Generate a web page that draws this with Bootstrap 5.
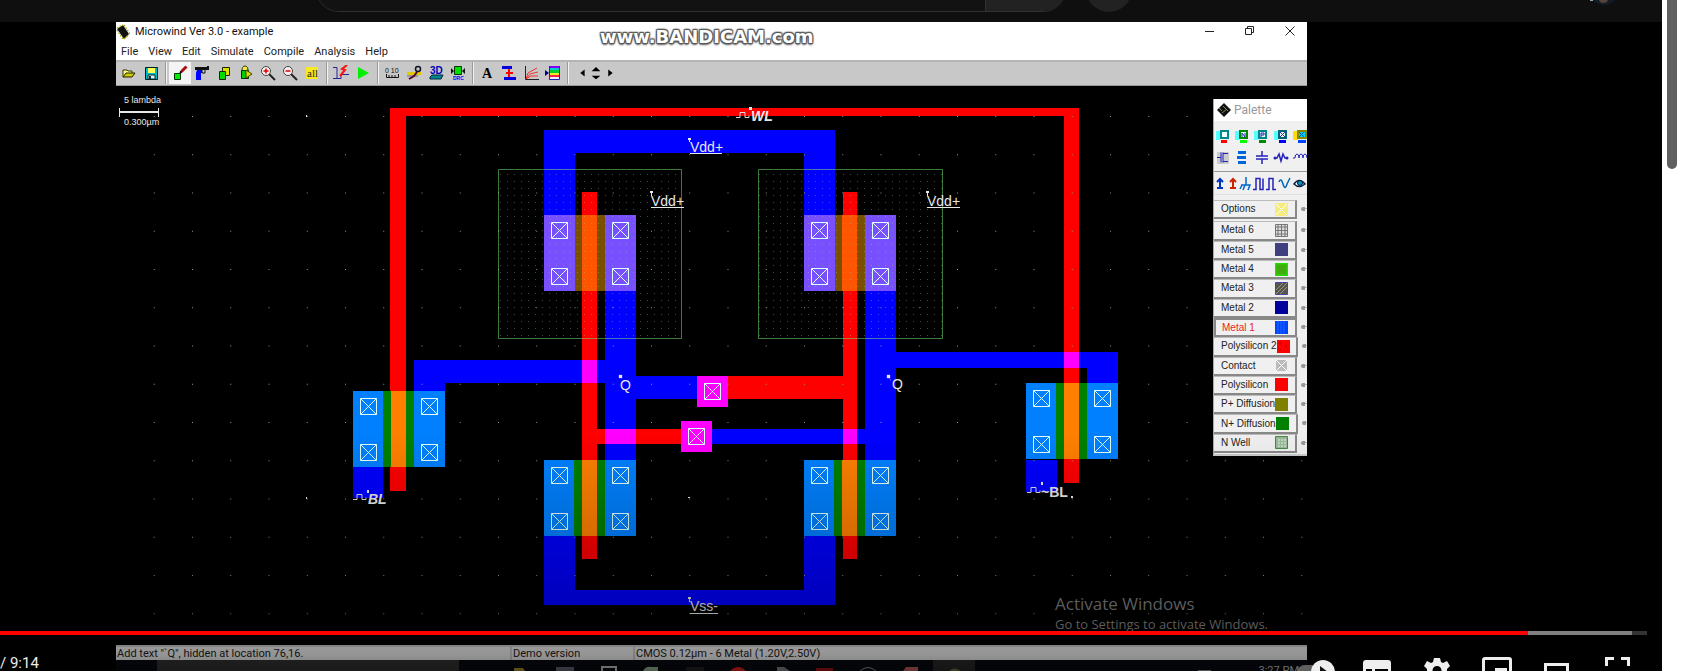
<!DOCTYPE html>
<html lang="en">
<head>
<meta charset="utf-8">
<meta name="viewport" content="width=device-width, initial-scale=1">
<title>Microwind Ver 3.0 - example</title>
<link href="https://cdn.jsdelivr.net/npm/bootstrap@5.3.0/dist/css/bootstrap.min.css" rel="stylesheet">
<style>
body{background:#fff;font-family:Roboto,sans-serif;font-size:11px;line-height:16px;color:#222}
.page-side{width:20px;padding:0 5px}
.thumb{width:10px;height:169px;background:#606060;border-radius:0 0 5px 5px}
.site-head{height:22px;background:#0f0f0f;overflow:hidden}
.find-form{margin-left:316px;width:750px;height:46px;margin-top:-34px;border:1px solid #303030;border-radius:24px;overflow:hidden}
.find-form input{background:#121212;border:0;min-width:0;color:#eee}
.find-form button{width:80px;background:#222;border:0;border-left:1px solid #303030}
.mic{width:46px;height:46px;margin:-34px 0 0 20px;border:0;border-radius:50%;background:#222}
.account{margin-right:42px}
.player{background:#000}
.app-win{margin-left:116px;margin-right:355px}
.title-row{height:20px;background:#fff;color:#111;gap:5px}
.watermark{left:484px;top:5px;font:bold 18px/20px "DejaVu Sans",sans-serif;color:#fff;text-shadow:-1px -1px 1px #555,1px -1px 1px #555,-1px 1px 1px #555,1px 1px 1px #555,0 2px 2px #666,0 -1px 2px #777}
.win-ctl button{width:40px;height:20px;border:0;background:none;padding:0 12px 0 0;display:flex;justify-content:flex-end}
.menu-row{height:18px;background:#fff;gap:10px;padding-left:5px;line-height:20px}
.menu-row a{color:#222;text-decoration:none}
.tool-row{height:26px;background:#c8c8c8;border-top:2px solid #b4b4b4;border-bottom:1px solid #999;padding-left:2px}
.tool-row button{width:22px;height:22px;border:0;background:none;padding:0;display:flex;align-items:center;justify-content:center}
.tool-row button.narrow{width:14px}
.tool-row button.on{background:#f4f4f4}
.tool-row svg{width:16px;height:16px}
.tool-row i{width:7px;height:22px;display:flex;justify-content:center}
.tool-row i::before{content:"";width:2px;border-left:1px solid #999;border-right:1px solid #f2f2f2}
.drawing{background:#000;min-height:0;overflow:hidden}
.drawing>svg{font-family:"Liberation Sans",sans-serif;font-size:14px}
.palette{top:13px;right:0;width:94px;height:357px;background:#f0f0f0;border-left:1px solid #aaa;border-bottom:2px solid #ccc;overflow:hidden;font:10px/16px "Liberation Sans",sans-serif}
.pal-title{height:22px;background:#fff;color:#999;font:12px/22px Roboto,sans-serif;gap:3px;padding-left:3px}
.pal-icons{width:94px;height:51px;border-bottom:1px solid #999;display:block}
.pal-src{width:94px;height:22px;display:block}
.layer-list{height:259px;padding-top:5px}
.layer-list button{width:84px;border:1px solid #bbb;border-width:1px 2px 2px 0;border-color:#bbb #888 #888 #bbb;background:#f0f0f0;padding:0 7px;display:flex;align-items:center;justify-content:space-between;color:#222;line-height:14px;white-space:nowrap}
.layer-list button.picked{border:2px solid #888;color:#e22;padding-left:6px}
.layer-list .opt{margin-bottom:2px}
.layer-row{flex:1 1 0;display:flex;min-height:0}
.layer-row::after{content:"";width:6px;height:4px;margin:7px 0 0 4px;border-left:4px solid #999;border-radius:2px;background:linear-gradient(#aaa,#aaa) 0 1px/6px 1px no-repeat}
.swatch{width:13px;height:13px;flex:none}
.status-row{height:15px;background:#f0f0f0;border-top:2px solid #ccc;line-height:14px;color:#222}
.status-row span{padding-left:1px;border-right:2px solid #ccc;white-space:nowrap}
.status-row .msg{width:396px}
.status-row .ver{width:123px}
.task-row{height:11px;background:#080a10;overflow:hidden;color:#ccc}
.task-find{margin-left:41px;width:302px;background:#343434}
.task-row .clock{padding:3px 8px 0 0}
.shade{left:0;right:0;bottom:0;height:241px;background:linear-gradient(rgba(0,0,0,0),rgba(0,0,0,.18) 50%,rgba(0,0,0,.25) 70%,rgba(0,0,0,.38) 93%,rgba(0,0,0,.5));pointer-events:none}
.notice{left:1055px;bottom:38px;color:#5c5c5c;font:13px/18px "Open Sans",sans-serif}
.notice strong{font-weight:400;font-size:17px;line-height:22px;display:block}
.track{left:0;right:15px;bottom:36px;height:4px;border-radius:0;background:#333}
.track .buf{background:#808080}
.controls{left:0;right:0;bottom:0;height:20px;overflow:hidden;color:#eee}
.controls time{font-size:15px;line-height:16px;padding-top:4px;white-space:pre}
.controls .tools{margin-right:15px}
.controls button{border:0;background:none;padding:0;width:60px;height:38px}
.controls svg{display:block;margin:auto}
</style>
</head>
<body>
<div class="d-flex vh-100 overflow-hidden">
<main class="flex-grow-1 d-flex flex-column overflow-hidden">
<header class="site-head d-flex flex-shrink-0">
  <form class="find-form d-flex flex-shrink-0"><input class="flex-grow-1" aria-label="Search"><button type="button" aria-label="Submit search"></button></form>
  <button class="mic flex-shrink-0" aria-label="Voice search"></button>
  <svg class="account ms-auto" width="32" height="22"><path d="M2 0h3v1H2z" fill="#8aa"/><circle cx="16" cy="-10" r="15" fill="#131c24"/><path d="M11 0h9q-1 3-5 3-3 0-4-3" fill="#54443a"/></svg>
</header>
<section class="player flex-grow-1 position-relative d-flex overflow-hidden">
<div class="app-win flex-grow-1 d-flex flex-column overflow-hidden">
  <div class="title-row d-flex align-items-center flex-shrink-0 position-relative">
    <svg width="14" height="16" viewBox="0 0 14 16"><path d="M1 5l6-4 6 9-5 5z" fill="#111"/><path d="M1 4l6-3M1 6l6 9M8 1l6 9M8 15l5-4" stroke="#aa2" stroke-width="1.500" stroke-dasharray="1.5 1.5"/></svg>
    <span>Microwind Ver 3.0 - example</span>
    <span class="watermark position-absolute">www.BANDICAM.com</span>
    <div class="win-ctl ms-auto d-flex">
      <button aria-label="Minimize"><svg width="10" height="16"><path d="M0 9.500h9" stroke="#222"/></svg></button>
      <button aria-label="Restore"><svg width="10" height="16" fill="none" stroke="#222"><path d="M.5 6.500h6v6h-6zM2.500 6V4.500h6v6H7"/></svg></button>
      <button aria-label="Close"><svg width="10" height="16"><path d="M.5 4.500l9 9m0-9l-9 9" stroke="#222"/></svg></button>
    </div>
  </div>
  <nav class="menu-row d-flex flex-shrink-0"><a href="#">File</a><a href="#">View</a><a href="#">Edit</a><a href="#">Simulate</a><a href="#">Compile</a><a href="#">Analysis</a><a href="#">Help</a></nav>
  <div class="tool-row d-flex flex-shrink-0" role="toolbar">
    <button aria-label="Open"><svg viewBox="0 0 16 16"><path d="M2 12V5h4l1 1h4v2" fill="#ff8" stroke="#330"/><path d="M2 12l3-4h9l-3 4z" fill="#cc0" stroke="#220"/></svg></button>
    <button aria-label="Save"><svg viewBox="0 0 16 16"><path d="M2.500 2.500h12v12h-12z" fill="#0bc" stroke="#022"/><path d="M5 3h7v5H5z" fill="#ff5"/><path d="M5 10h7v4H5z" fill="#eee" stroke="#033"/><path d="M6 11h2v3H6z" fill="#034"/></svg></button>
    <i></i>
    <button class="on" aria-label="Draw box"><svg viewBox="0 0 16 16"><path d="M2.500 8.500h6v6h-6z" fill="#0e0" stroke="#030"/><path d="M8 8l2-2" stroke="#000" stroke-width="2"/><path d="M9.500 6.500l5-5" stroke="#b01010" stroke-width="3"/></svg></button>
    <button aria-label="Cut"><svg viewBox="0 0 16 16"><path d="M1 2h12v-1h2v4H1z" fill="#111"/><path d="M3 5h5v3H7v7H2V8z" fill="#00f"/><path d="M8 5v3h3V5" fill="none" stroke="#111"/></svg></button>
    <button aria-label="Copy"><svg viewBox="0 0 16 16" stroke="#220"><path d="M6.500 2.500h7v8h-7z" fill="#dd0"/><path d="M3.500 6.500h6v8h-6z" fill="#0d0"/></svg></button>
    <button aria-label="Move"><svg viewBox="0 0 16 16"><path d="M4 6q0-5 3-5t3 5" fill="#ee4" stroke="#330"/><path d="M3.500 5.500h7v8h-7z" fill="#0c0" stroke="#030"/><path d="M8 5l6 4-6 4z" fill="#dd0" stroke="#440"/></svg></button>
    <button aria-label="Zoom in"><svg viewBox="0 0 16 16"><path d="M9 9l6 6" stroke="#222" stroke-width="2"/><circle cx="6" cy="6" r="4.500" fill="#fee" stroke="#444"/><path d="M3.500 6h5M6 3.500v5" stroke="#d00" stroke-width="1.500"/></svg></button>
    <button aria-label="Zoom out"><svg viewBox="0 0 16 16"><path d="M9 9l6 6" stroke="#222" stroke-width="2"/><circle cx="6" cy="6" r="4.500" fill="#fee" stroke="#444"/><path d="M3.500 6h5" stroke="#d00" stroke-width="1.500"/></svg></button>
    <button aria-label="View all"><svg viewBox="0 0 16 16"><path d="M2 2h12v12H2z" fill="#f8e820"/><text x="3" y="12" font-family="Liberation Serif" font-size="11" fill="#222">all</text></svg></button>
    <i></i>
    <button aria-label="Cross section"><svg viewBox="0 0 16 16" fill="none"><path d="M0 2.500h4v11H0" stroke="#229"/><path d="M4 13.500h4v-4h8" stroke="#229"/><path d="M14 0L9 4l3 1-5 6" stroke="#f11" stroke-width="2"/></svg></button>
    <button aria-label="Run simulation"><svg viewBox="0 0 16 16"><path d="M3 2l11 6-11 6z" fill="#0e0"/></svg></button>
    <i></i>
    <button aria-label="Measure"><svg viewBox="0 0 16 16"><text x="1" y="8" font-family="Liberation Sans" font-size="7" fill="#111">0 10</text><path d="M2.500 9v3.500h12V9M5 12v-2m3 2v-2m3 2v-2" fill="none" stroke="#111"/></svg></button>
    <button aria-label="2D view"><svg viewBox="0 0 16 16"><path d="M1 7h14v3H1z" fill="#dc0"/><path d="M1 10h11v2H1z" fill="#999"/><path d="M3 14l5-3 3-4" stroke="#503" stroke-width="2" fill="none"/><circle cx="12" cy="4" r="2.500" fill="none" stroke="#112" stroke-width="1.500"/></svg></button>
    <button aria-label="3D view"><svg viewBox="0 0 16 16"><path d="M2 12l2-2h11l-2 4H2z" fill="#088" stroke="#024"/><text x="2" y="9" font-family="Liberation Sans" font-size="10" font-weight="bold" fill="#00b">3D</text></svg></button>
    <button aria-label="Design rules"><svg viewBox="0 0 16 16"><path d="M4.500 1.500h7v8h-7z" fill="#0d0" stroke="#030"/><path d="M1 3l3 3-3 3zM15 3l-3 3 3 3z" fill="#111"/><text x="3" y="15" font-family="Liberation Sans" font-size="5" font-weight="bold" fill="#00f">DRC</text></svg></button>
    <i></i>
    <button aria-label="Add text"><svg viewBox="0 0 16 16"><text x="3" y="13" font-family="Liberation Serif" font-size="14" font-weight="bold" fill="#000">A</text></svg></button>
    <button aria-label="Add contact"><svg viewBox="0 0 16 16"><path d="M1 1h10v3H1zM3 12h12v3H3z" fill="#00d"/><path d="M8 4v8M5 8h7" stroke="#f00" stroke-width="2"/></svg></button>
    <button aria-label="MOS curves"><svg viewBox="0 0 16 16" fill="none"><path d="M3 14l2-6 9-5M3 14l4-5 8-2M3 14l5-3h7" stroke="#e33"/><path d="M2.500 1v13.500H16" stroke="#222"/></svg></button>
    <button aria-label="Layers"><svg viewBox="0 0 16 16"><path d="M4 1h11v2H4z" fill="#80f"/><path d="M4 3h11v2H4z" fill="#0cc"/><path d="M4 5h11v3H4z" fill="#0c3"/><path d="M4 8h11v2H4z" fill="#ee2"/><path d="M4 10h11v2H4z" fill="#f24"/><path d="M4 12h11v2H4z" fill="#eef"/><path d="M4.500 1v13.500h10V1" fill="none" stroke="#22a"/><path d="M0 5l4 3-4 3z" fill="#008"/></svg></button>
    <i></i>
    <button class="narrow ms-1" aria-label="Left"><svg viewBox="0 0 16 16"><path d="M11 4v8L6 8z"/></svg></button>
    <button class="narrow" aria-label="Up and down"><svg viewBox="0 0 16 16"><path d="M3 6l5-5 5 5zM3 11h10l-5 4z"/></svg></button>
    <button class="narrow" aria-label="Right"><svg viewBox="0 0 16 16"><path d="M6 4v8l5-4z"/></svg></button>
  </div>

  <div class="drawing flex-grow-1 position-relative">
  <svg width="100%" height="100%" role="img" aria-label="SRAM cell layout">
  <defs>
    <pattern id="grid" x="345" y="116" width="38.250" height="38.250" patternUnits="userSpaceOnUse"><path d="M0 0h1v1H0z" fill="#99997a"/></pattern>
    <pattern id="welldots" x="500" y="174" width="7" height="7" patternUnits="userSpaceOnUse"><path d="M0 0h1v1H0z" fill="#9c9" fill-opacity=".38"/></pattern>
    <g id="via" fill="none" stroke="#dff"><path d="M.5.5h16v16H.5zM.5.5l16 16m0-16l-16 16"/></g>
    <g id="vias"><use href="#via" x="7" y="7"/><use href="#via" x="68" y="7"/><use href="#via" x="7" y="53"/><use href="#via" x="68" y="53"/></g>
    <g id="nmos"><path d="M0 0h92v76H0z" fill="#0080ff"/><path d="M30 0h31v76H30z" fill="#008000"/><path d="M38 0h15v76H38z" fill="#ff8000"/><use href="#vias"/></g>
    <g id="pmos"><path d="M0 0h92v76H0z" fill="#7850ff"/><path d="M31 0h30v76H31z" fill="#785000"/><path d="M38 0h15v76H38z" fill="#ff5500"/><use href="#vias"/></g>
    <path id="clock" d="M0 5.500h4v-5h5v5h4v-2" fill="none" stroke="#ddd"/>
  </defs>
  <g transform="translate(-116 -86)">
    <g fill="#00f">
      <path d="M544 215v-85h291v85h-31v-62H575v62z"/>
      <path d="M605 291h31v85h61v23h-61v61h-31v-77H445v8h-31v-31h191z"/>
      <path d="M865 291h31v61h222v31h-31v-15H896v92h-31v-16H712v-15h153z"/>
      <path d="M353 467h30v31h-30zM1026 460h31v32h-31z"/>
      <path d="M544 536h31v54h229v-54h31v69H544z"/>
    </g>
    <g fill="#f00">
      <path d="M390 108h689v375h-15V116H406v375h-16z"/>
      <path d="M582 192h15v237h84v15h-84v115h-15z"/>
      <path d="M843 192h14v367h-14V399H728v-23h115z"/>
    </g>
    <path fill="#f0f" d="M582 360h15v23h-15zM605 429h31v15h-31zM843 429h14v15h-14zM1064 352h15v16h-15zM697 376h31v31h-31zM681 421h31v31h-31z"/>
    <path d="M150 86h1157v535H150z" fill="url(#grid)"/>
    <use href="#pmos" x="544" y="215"/><use href="#pmos" x="804" y="215"/>
    <use href="#nmos" x="544" y="460"/><use href="#nmos" x="804" y="460"/>
    <use href="#nmos" x="353" y="391"/><use href="#nmos" x="1026" y="383"/>
    <use href="#via" x="704" y="383"/><use href="#via" x="688" y="428"/>
    <path d="M498.500 169.500h183v169h-183zM758.500 169.500h184v169h-184z" fill="url(#welldots)" stroke="#70e070" stroke-opacity=".55"/>
    <g fill="#e8e8e8">
      <g font-size="9"><text x="124" y="103">5 lambda</text><text x="124" y="125">0.300µm</text></g>
      <path d="M120 111h38v2h-38zM119 108h1v9h-1zM158 108h1v9h-1z"/>
      <text x="690" y="152">Vdd+</text><text x="651" y="206">Vdd+</text><text x="927" y="206">Vdd+</text><text x="690" y="611">Vss-</text>
      <path d="M690 153h32v1h-32zM651 207h33v1h-33zM927 207h33v1h-33zM690 613h28v1h-28z"/>
      <path d="M688 138h3v2h-1v2h-1v-2h-1zM650 191h3v2h-1v3h-1v-3h-1zM926 191h3v2h-1v3h-1v-3h-1zM688 597h3v2h-1v3h-1v-3h-1z"/>
      <text x="620" y="390">Q</text><text x="892" y="389">Q</text>
      <path d="M619 375h3v3h-3zM887 375h3v3h-3zM889 377l2 4" stroke="#e8e8e8" stroke-width=".3"/>
      <g font-weight="bold"><text x="751" y="121" font-style="italic">WL</text><text x="368" y="504" font-style="italic">BL</text><text x="1041" y="497">~BL</text></g>
      <path d="M749 107h3v3h-3zM367 490h2v3h-2zM1041 482h2v3h-2zM1071 496h2v2h-2z"/>
      <path d="M306 115h1v2h-1zM306 497h1v2h-1zM688 497h2v1h-2z"/>
      <use href="#clock" x="736" y="112"/><use href="#clock" x="353" y="494"/><use href="#clock" x="1027" y="487"/>
    </g>
  </g>
  </svg>
  <aside class="palette position-absolute">
    <div class="pal-title d-flex align-items-center"><svg width="14" height="14"><path d="M7 0l7 7-7 7-7-7z" fill="#111"/><path d="M2 5l3 3m1-5l5 5M5 10l5-4" stroke="#885"/></svg><span>Palette</span></div>
    <svg class="pal-icons">
      <defs><g id="cell"><path d="M0 2h4v9H0z" fill="#5ff" stroke="none"/><path d="M5 2h7v7H5z" fill="#eff" stroke-width="2"/></g></defs>
      <g transform="translate(2 8)"><use href="#cell" stroke="#088"/><path d="M5 11h6v3H5z" fill="#f00"/></g>
      <g transform="translate(21 8)"><use href="#cell" stroke="#080"/><path d="M5 11h7v3H5z" fill="#0f0"/><path d="M7 8V4l3 4V4" fill="none" stroke="#22a"/></g>
      <g transform="translate(40 8)"><use href="#cell" stroke="#088"/><path d="M5 11h7v3H5z" fill="#080"/><path d="M7 8V4h3v2H7" fill="none" stroke="#22a"/></g>
      <g transform="translate(60 8)"><use href="#cell" stroke="#067"/><path d="M5 11h7v3H5z" fill="#00f"/><path d="M6 3l5 5m0-5L6 8" stroke="#22a"/></g>
      <g transform="translate(79 8)"><path d="M0 2h5v9H0z" fill="#fd0"/><path d="M5 2h8v7H5z" fill="#0cf" stroke="#880" stroke-width="2"/><path d="M6 3l5 5m0-5L6 8" stroke="#06a"/><path d="M5 11h8v3H5z" fill="#04f"/></g>
      <path d="M3 31h12v12H3z" fill="#ccc"/>
      <g fill="none" stroke="#22b"><path d="M3 36.500h4m0-5v10m2-10v10m0-9h5m-5 8h5"/><path d="M48 30v5m-6 0h12m-12 3h12m-6 0v5" stroke-width="1.500"/><path d="M60 37h3l2-4 2 7 2-7 2 4h3" stroke-width="1.500"/><path d="M79 37h2q0-4 2-4t2 4q0-4 2-4t2 4q0-4 2-4t2 4"/></g>
      <path d="M24 30h8v3h-8zM23 35h9v3h-9zM24 40h8v3h-8z" fill="#06d"/>
      <circle cx="61" cy="37" r="1.500" fill="#22b"/><circle cx="73" cy="37" r="1.500" fill="#22b"/>
    </svg>
    <svg class="pal-src" viewBox="0 -2 94 22" fill="none">
      <path d="M6 5v9M3 8l3-3 3 3M3 14h6" stroke="#03b" stroke-width="2"/><path d="M19 5v9M16 8l3-3 3 3M16 14h6" stroke="#c20" stroke-width="2"/>
      <path d="M32 3v8M27 11h9l-2 5m-3-5l-2 5M28 11l-2 4" stroke="#06c" stroke-width="1.500"/><path d="M39 15.500h3v-11h4v11h3v-11" stroke="#22b" stroke-width="1.500"/><path d="M52 15.500h3v-11h4v11h3" stroke="#22b" stroke-width="1.500"/><path d="M65 8q2-5 4 2t4 0l3-6" stroke="#06b" stroke-width="1.500"/>
      <path d="M80 10q5-7 11 0-6 5-11 0z" stroke="#124" stroke-width="1.500" fill="#fff"/><circle cx="86" cy="9" r="2.500" fill="#09c" stroke="#013"/>
    </svg>
    <div class="layer-list d-flex flex-column border-top">
      <div class="layer-row opt"><button>Options<svg class="swatch"><path d="M0 0h13v13H0z" fill="#f5ec80"/><path d="M1 1l11 11m0-11L1 12" stroke="#fff"/></svg></button></div>
      <div class="layer-row"><button>Metal 6<svg class="swatch"><path d="M0 0h13v13H0z" fill="#ddd"/><path d="M0 3h13M0 6.500h13M0 10h13M3 0v13M6.500 0v13M10 0v13M.5.5h12v12H.5z" fill="none" stroke="#777"/></svg></button></div>
      <div class="layer-row"><button>Metal 5<svg class="swatch"><path d="M0 0h13v13H0z" fill="#404080"/></svg></button></div>
      <div class="layer-row"><button>Metal 4<svg class="swatch"><path d="M0 0h13v13H0z" fill="#4a1"/><path d="M0 0h13v13H0z" fill="none" stroke="#2d0" stroke-width="3"/></svg></button></div>
      <div class="layer-row"><button>Metal 3<svg class="swatch"><path d="M.5.5h12v12H.5z" fill="#555" stroke="#44a"/><path d="M1 8l7-7M1 12L12 1M5 12l7-7" stroke="#996"/></svg></button></div>
      <div class="layer-row"><button>Metal 2<svg class="swatch"><path d="M0 0h13v13H0z" fill="#00009c"/></svg></button></div>
      <div class="layer-row"><button class="picked">Metal 1<svg class="swatch"><path d="M0 0h13v13H0z" fill="#04f"/><path d="M3 0v13m3-13v13m3-13v13" stroke="#26f"/></svg></button></div>
      <div class="layer-row"><button>Polysilicon 2<svg class="swatch"><path d="M0 0h13v13H0z" fill="#f00"/><path d="M3 2v3m6 0v3M3 9v2" stroke="#a00"/></svg></button></div>
      <div class="layer-row"><button>Contact<svg class="swatch"><path d="M1 1h11v11H1z" fill="#bbb"/><path d="M1 1l11 11m0-11L1 12" stroke="#fff"/></svg></button></div>
      <div class="layer-row"><button>Polysilicon<svg class="swatch"><path d="M0 0h13v13H0z" fill="#f00"/></svg></button></div>
      <div class="layer-row"><button>P+ Diffusion<svg class="swatch"><path d="M0 0h13v13H0z" fill="#808000"/></svg></button></div>
      <div class="layer-row"><button>N+ Diffusion<svg class="swatch"><path d="M0 0h13v13H0z" fill="#008000"/></svg></button></div>
      <div class="layer-row"><button>N Well<svg class="swatch"><path d="M.5.5h12v12H.5z" fill="#9b9" stroke="#484"/><path d="M3 4h8M3 7h8M3 10h8" stroke="#eee" stroke-dasharray="2 1"/></svg></button></div>
    </div>
  </aside>
  </div>

  <div class="status-row d-flex flex-shrink-0"><span class="msg">Add text "`Q", hidden at location 76,16.</span><span class="ver">Demo version</span><span class="border-0">CMOS 0.12µm - 6 Metal (1.20V,2.50V)</span></div>
  <div class="task-row d-flex flex-shrink-0"><div class="task-find"></div>
    <svg class="flex-grow-1" height="11"><path d="M55 8h9l2 3H55z" fill="#a93"/><path d="M97 7h18v4H97z" fill="#667"/><path d="M143 11V7h14v4" fill="none" stroke="#ccc" stroke-width="2"/><path d="M184 11q3-5 8-4h7v4z" fill="#9b9"/><path d="M227 7h18v4h-18z" fill="#222"/><path d="M271 11q8-8 16 0z" fill="#e22"/><path d="M318 7h7l6 4h-13z" fill="#888"/><path d="M357 8h17v3h-17z" fill="#a11"/><path d="M401 11q8-7 16 0" stroke="#999" fill="none"/><path d="M444 11l3-4h12v4z" fill="#c66"/><path d="M474 0h42v11h-42z" fill="#2a2a2a"/><path d="M490 11q5-5 12 0" fill="#774"/><path d="M739 10h13v1h-13z" fill="#aaa"/></svg>
    <span class="clock">3:27 PM</span></div>
</div>
<div class="shade position-absolute"></div>
<div class="notice position-absolute"><strong>Activate Windows</strong>Go to Settings to activate Windows.</div>
<div class="track progress position-absolute" role="progressbar" aria-label="Seek" aria-valuenow="92"><div style="width:92.8%;background:#f00"></div><div class="buf" style="width:6.3%"></div></div>
<div class="controls position-absolute d-flex justify-content-between">
  <time>/ 9:14</time>
  <div class="tools d-flex">
    <button aria-label="Autoplay"><svg width="44" height="26"><path d="M10 8h22v16H10a8 8 0 010-16" fill="#777" fill-opacity=".8"/><circle cx="28" cy="15" r="12" fill="#eee"/><path d="M25 9v12l8-6z" fill="#111"/></svg></button>
    <button aria-label="Subtitles"><svg width="28" height="26"><path fill="#eee" fill-rule="evenodd" d="M3 3h22q3 0 3 3v20H0V6q0-3 3-3M3 12v3h6v-3zM12 12v3h13v-3zM3 18v3h13v-3zM19 18v3h6v-3z"/></svg></button>
    <button aria-label="Settings"><svg width="28" height="28"><path fill="#eee" fill-rule="evenodd" d="M11 2h6l1 4 2 1 4-2 3 5-3 3v3l3 3-3 5-4-2-2 1-1 4h-6l-1-4-2-1-4 2-3-5 3-3v-3L1 10l3-5 4 2 2-1zM14 10a4.500 4.500 0 100 9 4.500 4.500 0 000-9"/></svg></button>
    <button aria-label="Miniplayer"><svg width="30" height="28"><path d="M1.500 28V4q0-1.500 1.500-1.500h24q1.500 0 1.500 1.500v24" fill="none" stroke="#eee" stroke-width="3"/><path d="M13 12h12v9H13z" fill="#eee"/></svg></button>
    <button aria-label="Theater mode"><svg width="26" height="26"><path d="M1.500 7.500h22v15h-22z" fill="none" stroke="#eee" stroke-width="3"/></svg></button>
    <button aria-label="Full screen"><svg width="25" height="28"><path d="M1.500 10V2.500H9M16 2.500h7.500V10M1.500 18v7.500H9M16 25.500h7.500V18" fill="none" stroke="#eee" stroke-width="3"/></svg></button>
  </div>
</div>
</section>
</main>
<div class="page-side flex-shrink-0"><div class="thumb"></div></div>
</div>
<script src="https://cdn.jsdelivr.net/npm/bootstrap@5.3.0/dist/js/bootstrap.bundle.min.js"></script>
</body>
</html>
